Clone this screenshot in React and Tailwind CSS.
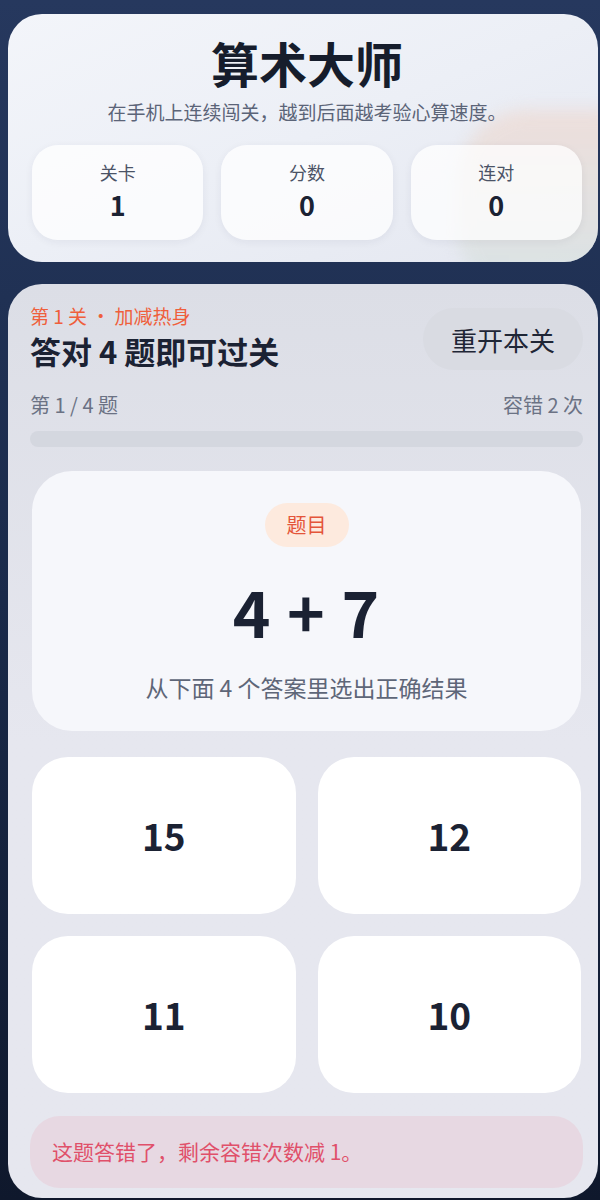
import React from 'react';

const font = { fontFamily: '"Noto Sans CJK SC", "Noto Sans", sans-serif' };

function Stat({ label, value }) {
    return (
        <div className="flex-1 h-[95px] rounded-[26px] bg-white/75 flex flex-col items-center pt-[17px] shadow-[0_2px_8px_rgba(30,40,70,0.06)]">
            <div className="text-[18px] leading-[20px] text-[#4b5366]">{label}</div>
            <div className="mt-[9px] text-[27px] leading-[28px] font-bold text-[#1b2233]">{value}</div>
        </div>
    );
}

function Answer({ value }) {
    return (
        <button className="h-[157px] rounded-[36px] bg-white flex items-center justify-center text-[37px] font-bold text-[#1b2233]">
            {value}
        </button>
    );
}

export default function App() {
    return (
        <div style={font} className="w-[600px] h-[1200px] overflow-hidden bg-gradient-to-b from-[#26385e] via-[#1a2a4a] to-[#0f182c] pt-[14px] pl-[8px] pr-[2px]">
            {/* header */}
            <div className="relative overflow-hidden h-[248px] rounded-[34px] bg-gradient-to-br from-[#f3f5fa] via-[#eceff6] to-[#e4e7f0] pl-[24px] pr-[16px] pt-[20px]">
                <div className="absolute right-[-70px] top-[96px] w-[210px] h-[190px] rounded-[70px] bg-gradient-to-b from-[#f0d6cb] to-[#cfe1e0] opacity-60 blur-[8px]" />
                <div className="relative flex flex-col items-center">
                    <h1 className="text-[48px] leading-[56px] font-bold text-[#161d2c]">算术大师</h1>
                    <p className="mt-[9px] text-[19px] leading-[26px] text-[#5b6478]">在手机上连续闯关，越到后面越考验心算速度。</p>
                </div>
                <div className="relative mt-[20px] flex gap-[18px]">
                    <Stat label="关卡" value="1" />
                    <Stat label="分数" value="0" />
                    <Stat label="连对" value="0" />
                </div>
            </div>

            {/* main */}
            <div className="mt-[22px] h-[914px] rounded-[34px] bg-gradient-to-b from-[#dcdee6] via-[#e6e7ef] to-[#e6e7ef] pl-[22px] pr-[15px] pt-[20px]">
                <div className="flex items-start justify-between">
                    <div>
                        <div className="text-[19px] leading-[24px] text-[#ef5f3c]">第 1 关 · 加减热身</div>
                        <div className="mt-[4px] text-[31px] leading-[38px] font-bold text-[#1b2233]">答对 4 题即可过关</div>
                    </div>
                    <button className="mt-[4px] w-[160px] h-[62px] rounded-full bg-[#d9dbe2] text-[26px] text-[#1f2636]">重开本关</button>
                </div>
                <div className="mt-[22px] flex justify-between text-[20px] leading-[26px] text-[#6b7284]">
                    <span>第 1 / 4 题</span>
                    <span>容错 2 次</span>
                </div>
                <div className="mt-[13px] h-[16px] rounded-full bg-[#d4d7df]" />

                <div className="mt-[24px] mx-[2px] h-[260px] rounded-[40px] bg-[#f6f7fb] flex flex-col items-center pt-[32px]">
                    <div className="w-[84px] h-[44px] rounded-full bg-[#fdeade] text-[20px] text-[#e4553a] flex items-center justify-center">题目</div>
                    <div className="mt-[27px] text-[64px] leading-[72px] font-bold text-[#1b2233] tracking-[1px]">4 + 7</div>
                    <div className="mt-[27px] text-[23px] leading-[28px] text-[#5e6678]">从下面 4 个答案里选出正确结果</div>
                </div>

                <div className="mt-[26px] mx-[2px] grid grid-cols-2 gap-[22px]">
                    <Answer value="15" />
                    <Answer value="12" />
                    <Answer value="11" />
                    <Answer value="10" />
                </div>

                <div className="mt-[23px] h-[72px] rounded-[30px] bg-[#e7d8e2] flex items-center pl-[22px] text-[21px] text-[#e0506a]">
                    这题答错了，剩余容错次数减 1。
                </div>
            </div>
        </div>
    );
}
